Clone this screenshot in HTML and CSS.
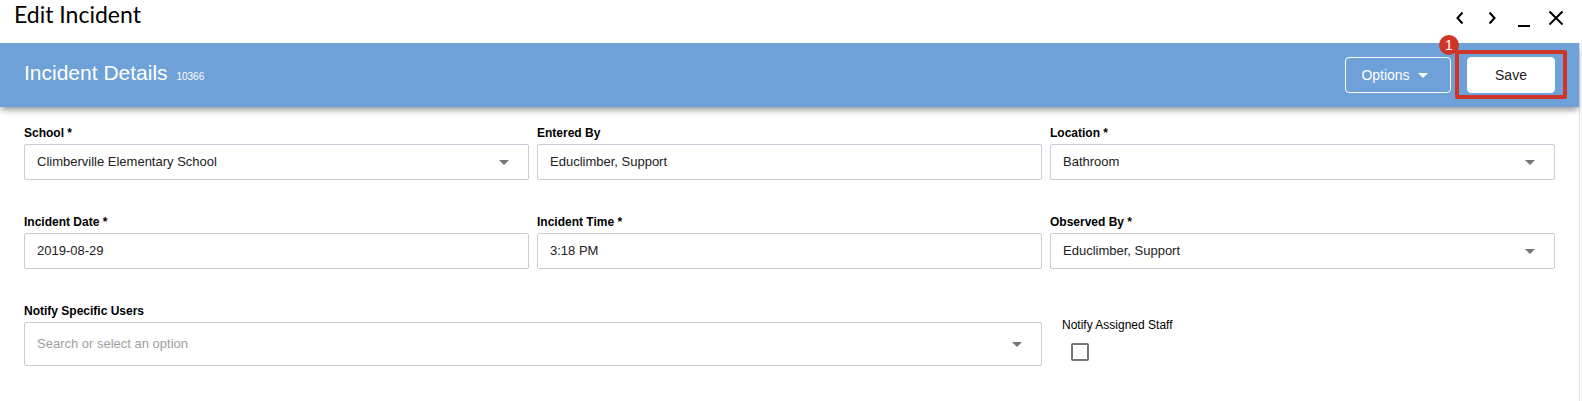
FILE: index.html
```html
<!DOCTYPE html>
<html lang="en">
<head>
<meta charset="UTF-8" />
<meta name="viewport" content="width=device-width, initial-scale=1.0"/>
<title>Edit Incident</title>
<link rel="stylesheet" href="styles.css">
</head>
<body>

<header class="window-bar">
    <h1>Edit Incident</h1>
    <div class="window-controls">
        <button type="button" aria-label="Previous">
            <svg width="20" height="20" viewBox="0 0 20 20"><path d="M12.5 4.5 7.5 10l5 5.5"/></svg>
        </button>
        <button type="button" aria-label="Next">
            <svg width="20" height="20" viewBox="0 0 20 20"><path d="M7.5 4.5l5 5.5-5 5.5"/></svg>
        </button>
        <button type="button" aria-label="Minimize">
            <svg width="20" height="20" viewBox="0 0 20 20"><path d="M4 18h12"/></svg>
        </button>
        <button type="button" aria-label="Close">
            <svg width="20" height="20" viewBox="0 0 20 20"><path d="M3.5 3.5l13 13M16.5 3.5l-13 13"/></svg>
        </button>
    </div>
</header>

<main class="window-body">
    <form class="panel">
        <div class="toolbar">
            <h2>Incident Details <small>10366</small></h2>
            <div class="actions">
                <button type="button" class="btn btn-outline">Options <span class="caret"></span></button>
                <div class="callout">
                    <button type="submit" class="btn btn-save">Save</button>
                    <span class="callout-number">1</span>
                </div>
            </div>
        </div>

        <div class="fields">
            <div class="field">
                <label for="school">School *</label>
                <div class="select">
                    <select id="school"><option>Climberville Elementary School</option></select>
                </div>
            </div>
            <div class="field">
                <label for="entered-by">Entered By</label>
                <input type="text" id="entered-by" value="Educlimber, Support">
            </div>
            <div class="field">
                <label for="location">Location *</label>
                <div class="select">
                    <select id="location"><option>Bathroom</option></select>
                </div>
            </div>
            <div class="field">
                <label for="incident-date">Incident Date *</label>
                <input type="text" id="incident-date" value="2019-08-29">
            </div>
            <div class="field">
                <label for="incident-time">Incident Time *</label>
                <input type="text" id="incident-time" value="3:18 PM">
            </div>
            <div class="field">
                <label for="observed-by">Observed By *</label>
                <div class="select">
                    <select id="observed-by"><option>Educlimber, Support</option></select>
                </div>
            </div>
            <div class="field field-wide">
                <label for="notify-users">Notify Specific Users</label>
                <div class="select">
                    <input type="text" id="notify-users" class="tall" role="combobox" placeholder="Search or select an option">
                </div>
            </div>
            <div class="check-field">
                <label for="notify-staff">Notify Assigned Staff</label>
                <input type="checkbox" id="notify-staff">
            </div>
        </div>
    </form>
</main>

</body>
</html>
```
FILE: styles.css
```css
* {
    box-sizing: border-box;
}

body {
    display: flex;
    flex-direction: column;
    min-height: 100vh;
    margin: 0;
    background: #fff;
    color: #000;
    font-family: "Liberation Sans", Arial, sans-serif;
}

button, input, select {
    font-family: inherit;
}

/* Window title bar */
.window-bar {
    display: flex;
    justify-content: space-between;
    align-items: flex-start;
    height: 43px;
    padding: 0 10px 0 14px;
}

.window-bar h1 {
    margin: 0;
    font-family: Lato, sans-serif;
    font-size: 23px;
    font-weight: 400;
    line-height: 28px;
}

.window-controls {
    display: flex;
}

.window-controls button {
    display: flex;
    align-items: center;
    justify-content: center;
    width: 32px;
    height: 36px;
    padding: 0;
    border: none;
    background: none;
    cursor: pointer;
}

.window-controls svg {
    fill: none;
    stroke: #000;
    stroke-width: 2;
}

.window-body {
    display: flex;
    flex: 1;
    padding-right: 2px;
    background: #fafafa;
}

.panel {
    flex: 1;
    border-right: 1px solid #e4e4e4;
    background: #fff;
}

/* Blue toolbar */
.toolbar {
    display: flex;
    align-items: center;
    justify-content: space-between;
    height: 64px;
    padding: 0 24px;
    background: #6ea1d8;
    color: #fff;
    box-shadow: 0 4px 6px -1px rgba(0,0,0,0.4);
}

.toolbar h2 {
    margin: 0;
    font-size: 21px;
    font-weight: 400;
    line-height: 28px;
}

.toolbar small {
    margin-left: 3px;
    font-size: 10px;
}

.actions {
    display: flex;
    gap: 16px;
}

.btn {
    height: 36px;
    border: 1px solid #fff;
    border-radius: 4px;
    font-size: 14px;
    cursor: pointer;
}

.btn-outline {
    display: flex;
    align-items: center;
    justify-content: center;
    gap: 8px;
    width: 106px;
    padding: 0 7px 0 0;
    background: transparent;
    color: #fff;
}

.caret {
    border: 5px solid transparent;
    border-top-color: #fff;
    border-bottom: none;
}

.btn-save {
    width: 88px;
    background: #fff;
    color: #212121;
}

/* Numbered highlight round a control */
.callout {
    position: relative;
}

.callout::before {
    content: "";
    position: absolute;
    inset: -7px -12px -6px;
    border: 4px solid #ce3526;
    border-radius: 2px;
    pointer-events: none;
}

.callout-number {
    position: absolute;
    top: -22px;
    left: -28px;
    width: 20px;
    height: 20px;
    border-radius: 50%;
    background: #ce3526;
    font-size: 14px;
    line-height: 20px;
    text-align: center;
}

/* Form fields */
.fields {
    display: grid;
    grid-template-columns: repeat(3, 1fr);
    gap: 32px 8px;
    padding: 16px 24px;
}

.field label {
    display: block;
    padding-bottom: 1px;
    font-size: 12px;
    font-weight: bold;
    line-height: 20px;
}

.field input,
.field select {
    display: block;
    width: 100%;
    height: 36px;
    padding: 0 12px 2px;
    border: 1px solid #cbcad6;
    border-radius: 2px;
    background: #fff;
    color: #212121;
    font-size: 13px;
    appearance: none;
}

.field .tall {
    height: 44px;
}

.field input::placeholder {
    color: #9e9e9e;
}

.field-wide {
    grid-column: span 2;
}

.select {
    position: relative;
}

.select::after {
    content: "";
    position: absolute;
    top: calc(50% - 2px);
    right: 20px;
    border: 5px solid transparent;
    border-top-color: #757575;
    border-bottom: none;
    pointer-events: none;
}

.check-field {
    display: flex;
    flex-direction: column;
    align-items: flex-start;
    gap: 9px;
    padding: 15px 12px 0;
}

.check-field label {
    font-size: 12px;
    line-height: 18px;
}

.check-field input {
    width: 18px;
    height: 18px;
    margin: 0 9px;
    border: 2px solid #757575;
    border-radius: 2px;
    background: #fff;
    appearance: none;
}

.check-field input:checked {
    background: #757575;
}

@media (max-width: 700px) {
    .fields {
        grid-template-columns: 1fr;
    }
    .field-wide {
        grid-column: auto;
    }
}
```
